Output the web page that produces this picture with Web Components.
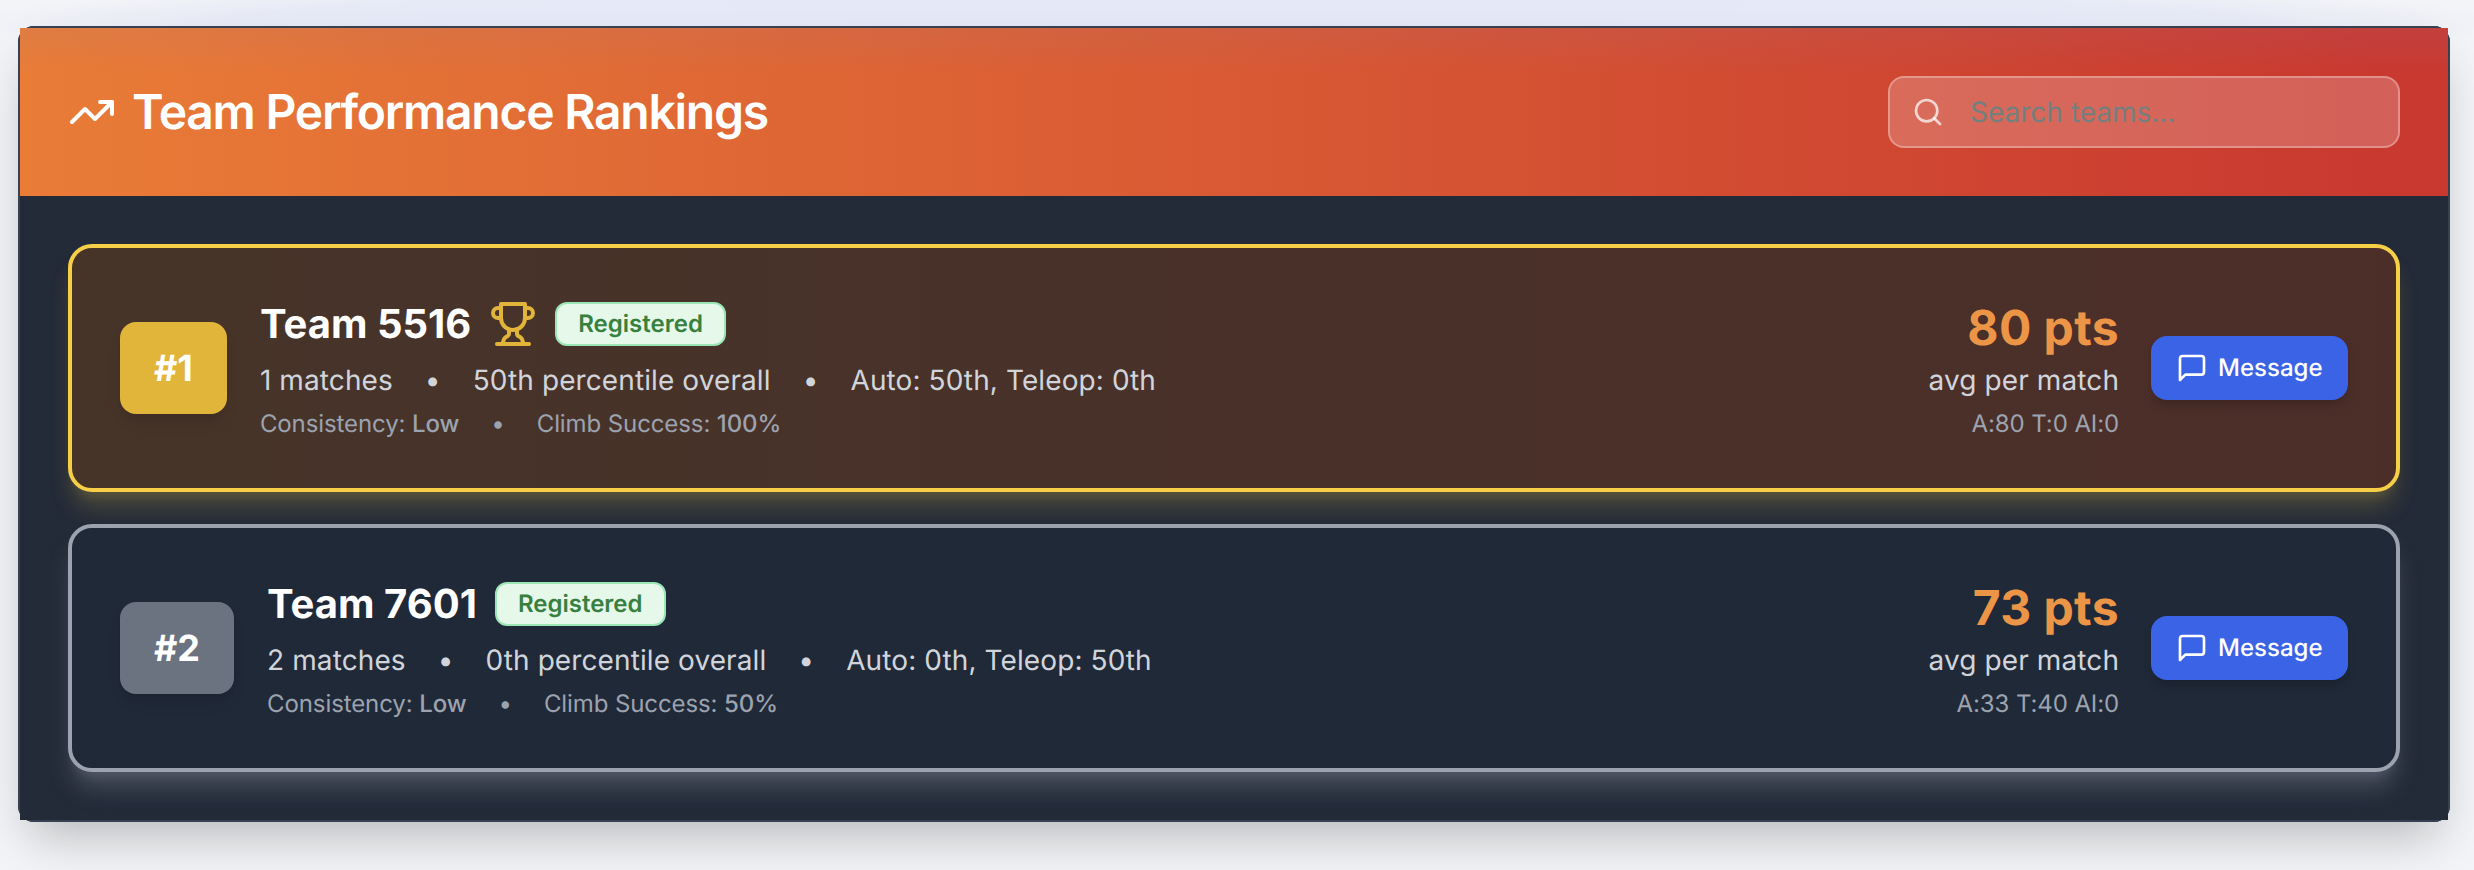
<!DOCTYPE html>
<html lang="en"><head><meta charset="utf-8"><title>Team Performance Rankings</title>
<style>
html,body{margin:0;padding:0;height:100%}
body{background:#f3f4f6;font-family:Inter,"Noto Sans",sans-serif;overflow:hidden;text-rendering:geometricPrecision;-webkit-font-smoothing:antialiased}
</style></head><body>
<rank-app>
  <rank-header slot="header">Team Performance Rankings</rank-header>
  <team-card tier="gold" rank="#1" team="Team 5516" trophy matches="1 matches" pct="50th percentile overall" split="Auto: 50th, Teleop: 0th" cons="Low" climb="100%" pts="80 pts" breakdown="A:80 T:0 AI:0"></team-card>
  <team-card tier="silver" rank="#2" team="Team 7601" matches="2 matches" pct="0th percentile overall" split="Auto: 0th, Teleop: 50th" cons="Low" climb="50%" pts="73 pts" breakdown="A:33 T:40 AI:0"></team-card>
</rank-app>
<script>
const icon=(s,body,extra='')=>`<svg ${extra} width="${s}" height="${s}" viewBox="0 0 24 24" fill="none" stroke="currentColor" stroke-width="2" stroke-linecap="round" stroke-linejoin="round">${body}</svg>`;
class RankApp extends HTMLElement{constructor(){super();this.attachShadow({mode:'open'}).innerHTML=`<style>
:host{display:block;height:870px;box-sizing:border-box;padding:26px 24px 48px 18px;background:radial-gradient(ellipse 1300px 46px at 50% 22px,#e4e7f6 0%,#e6e9f6 75%,transparent 100%),#f3f4f7}
.panel{border:2px solid #374151;border-radius:16px;background:#374151;box-shadow:0 25px 50px -12px rgba(0,0,0,.25);height:796px;box-sizing:border-box;position:relative}
.panel::before{content:"";position:absolute;inset:-2px;border-radius:16px;background:#374151;z-index:0}
.in{position:relative;z-index:1}
.body{background:#232a38;padding:48px;display:flex;flex-direction:column;gap:32px}
</style><div class="panel"><div class="in"><slot name="header"></slot><div class="body"><slot></slot></div></div></div>`}}
customElements.define('rank-app',RankApp);
class RankHeader extends HTMLElement{constructor(){super();this.attachShadow({mode:'open'}).innerHTML=`<style>
:host{display:flex;align-items:center;justify-content:space-between;height:168px;box-sizing:border-box;padding:0 48px;background:linear-gradient(180deg,rgba(125,130,190,.09),rgba(125,130,190,0) 45px),linear-gradient(90deg,#e97c37,#c93930 97%);color:#fff}
.t{display:flex;align-items:center;gap:16px;font-size:48px;line-height:64px;font-weight:600;letter-spacing:-1.25px;font-variation-settings:"opsz" 24}
svg{display:block;flex:none}
</style><div class="t">${icon(48,'<polyline points="22 7 13.5 15.5 8.5 10.5 2 17"/><polyline points="16 7 22 7 22 13"/>')}<span><slot></slot></span></div><search-box></search-box>`}}
customElements.define('rank-header',RankHeader);
class SearchBox extends HTMLElement{constructor(){super();this.attachShadow({mode:'open'}).innerHTML=`<style>
:host{display:flex;align-items:center;width:512px;height:72px;box-sizing:border-box;border:2px solid rgba(255,255,255,.3);border-radius:16px;background:rgba(255,255,255,.2);padding-left:22px;gap:26px}
svg{display:block;color:rgba(255,255,255,.72);flex:none}
span{font-size:28px;line-height:40px;color:#757f7e;font-variation-settings:"opsz" 14}
</style>${icon(32,'<circle cx="11" cy="11" r="8"/><path d="m21 21-4.35-4.35"/>')}<span>Search teams...</span>`}}
customElements.define('search-box',SearchBox);
class RegBadge extends HTMLElement{constructor(){super();this.attachShadow({mode:'open'}).innerHTML=`<style>
:host{display:inline-block;box-sizing:border-box;height:44px;padding:4px 21px;border:2px solid #9ae6b4;border-radius:12px;background:#e5f8ea;color:#38803f;font-size:24px;line-height:32px;font-weight:600;font-variation-settings:"opsz" 14}
</style><slot></slot>`}}
customElements.define('reg-badge',RegBadge);
class MsgButton extends HTMLElement{constructor(){super();this.attachShadow({mode:'open'}).innerHTML=`<style>
:host{display:flex;align-items:center;gap:10px;box-sizing:border-box;height:64px;padding:16px 25.5px 16px 25px;border-radius:16px;background:#3a63e5;color:#fff;font-size:24px;line-height:32px;font-weight:500;font-variation-settings:"opsz" 14;box-shadow:0 8px 12px -2px rgba(0,0,0,.12),0 4px 6px -2px rgba(0,0,0,.08)}
svg{display:block;flex:none}
</style>${icon(32,'<path d="M21 15a2 2 0 0 1-2 2H7l-4 4V5a2 2 0 0 1 2-2h14a2 2 0 0 1 2 2z"/>')}<slot></slot>`}}
customElements.define('msg-button',MsgButton);
class TeamCard extends HTMLElement{connectedCallback(){if(this.shadowRoot)return;const a=n=>this.getAttribute(n)||'';
this.attachShadow({mode:'open'}).innerHTML=`<style>
:host{display:flex;align-items:center;box-sizing:border-box;height:248px;padding:48px;border:4px solid;border-radius:24px}
:host([tier=gold]){border-color:#f6cf47;background:linear-gradient(90deg,#463429,#4c2e29);box-shadow:0 20px 25px -5px rgba(246,207,71,.2),0 10px 10px -5px rgba(246,207,71,.1)}
:host([tier=silver]){border-color:#9ca3af;background:#202938;box-shadow:0 20px 25px -5px rgba(156,163,175,.3),0 10px 10px -5px rgba(156,163,175,.14)}
.rank{flex:none;height:92px;box-sizing:border-box;padding:24px 34px;border-radius:16px;color:#fff;font-size:36px;line-height:44px;font-weight:700;font-variation-settings:"opsz" 18;box-shadow:0 10px 15px -3px rgba(0,0,0,.1),0 4px 6px -2px rgba(0,0,0,.05)}
:host([tier=gold]) .rank{background:#e1b53a}
:host([tier=silver]) .rank{background:#6b7280}
.main{flex:1;min-width:0;margin-left:33px}
.name{display:flex;align-items:center;gap:18px;height:56px;color:#fff;font-size:40px;line-height:56px;font-weight:700;font-variation-settings:"opsz" 20}
.name svg{display:block;color:#e1b53a}
.det,.sub{display:flex;align-items:center;margin-top:8px;white-space:pre;font-variation-settings:"opsz" 14}
.det{font-size:28px;line-height:40px;color:#d1d5db;letter-spacing:.1px}
.sub{font-size:24px;line-height:32px;color:#9ca3af;letter-spacing:-.1px}
.dot{margin:0 32px}
b{font-weight:500}
.score{text-align:right;margin-right:32px;font-variation-settings:"opsz" 14}
.pts{font-size:48px;line-height:64px;font-weight:700;color:#ed9547;font-variation-settings:"opsz" 24;letter-spacing:.4px}
.avg{font-size:28px;line-height:40px;color:#d1d5db;letter-spacing:.1px}
.bd{margin-top:8px;font-size:24px;line-height:32px;color:#9ca3af;letter-spacing:-.1px}
</style>
<div class="rank">${a('rank')}</div>
<div class="main">
<div class="name"><span>${a('team')}</span>${this.hasAttribute('trophy')?icon(48,'<path d="M6 9H4.5a2.5 2.5 0 0 1 0-5H6"/><path d="M18 9h1.5a2.5 2.5 0 0 0 0-5H18"/><path d="M4 22h16"/><path d="M10 14.66V17c0 .55-.47.98-.97 1.21C7.85 18.75 7 20.24 7 22"/><path d="M14 14.66V17c0 .55.47.98.97 1.21C16.15 18.75 17 20.24 17 22"/><path d="M18 2H6v7a6 6 0 0 0 12 0V2Z"/>'):''}<reg-badge>Registered</reg-badge></div>
<div class="det"><span>${a('matches')}</span><span class="dot">•</span><span>${a('pct')}</span><span class="dot">•</span><span>${a('split')}</span></div>
<div class="sub"><span>Consistency: <b>${a('cons')}</b></span><span class="dot">•</span><span>Climb Success: <b>${a('climb')}</b></span></div>
</div>
<div class="score"><div class="pts">${a('pts')}</div><div class="avg">avg per match</div><div class="bd">${a('breakdown')}</div></div>
<msg-button>Message</msg-button>`}}
customElements.define('team-card',TeamCard);
</script></body></html>
